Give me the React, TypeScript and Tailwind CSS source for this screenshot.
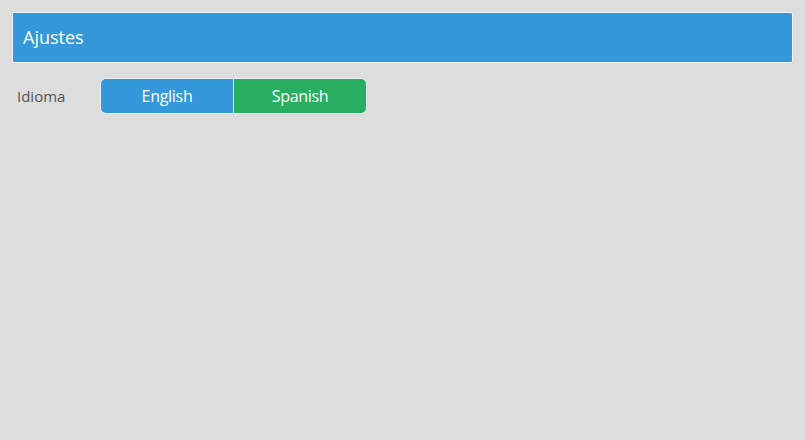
export default function App() {
  return (
    <main className="min-h-screen w-full bg-[#dddddd] px-3 pt-3 font-['Open_Sans',sans-serif]" style={{ minHeight: 440 }}>
      <div className="flex h-[51px] items-center rounded-[2px] border border-[#eef4fa] bg-[#3498db] px-[10px]">
        <h1 className="text-[18px] text-white">Ajustes</h1>
      </div>
      <div className="mt-[15px] flex items-center">
        <span className="w-[89px] pl-[5px] text-[15px] text-[#555555]">Idioma</span>
        <div className="-ml-px flex h-[36px] overflow-hidden rounded-[6px] border border-[#e8f0f8]">
          <button className="w-[132px] bg-[#3498db] text-[16px] text-white tracking-[-0.3px]">English</button>
          <button className="w-[133px] border-l border-[#eaf4ee] bg-[#27ae60] text-[16px] text-white tracking-[-0.3px]">Spanish</button>
        </div>
      </div>
    </main>
  );
}
